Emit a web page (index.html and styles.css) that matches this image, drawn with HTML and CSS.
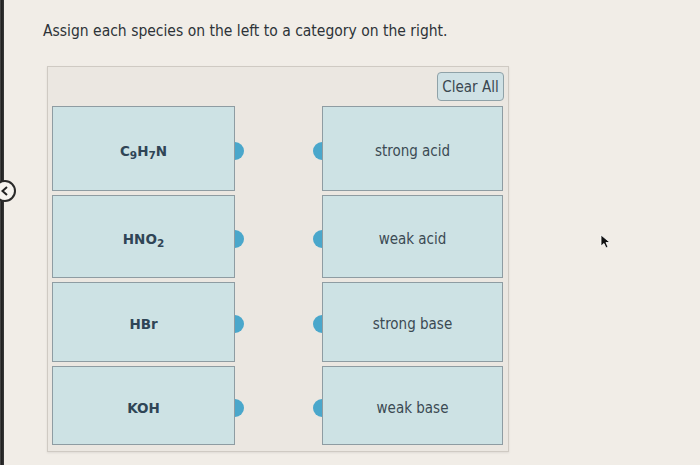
FILE: index.html
```html
<!DOCTYPE html>
<html>
<head>
<meta charset="utf-8">
<link rel="stylesheet" href="styles.css">
</head>
<body>
<div class="bezel"></div>
<div class="nav-btn"><svg width="12" height="12" viewBox="0 0 12 12"><path d="M8 2 L3.5 6 L8 10" fill="none" stroke="#222" stroke-width="2"/></svg></div>
<div class="page">
  <p class="title">Assign each species on the left to a category on the right.</p>
  <div class="panel">
    <div class="toolbar"><button class="clear">Clear All</button></div>
    <div class="rows">
      <div class="row">
        <div class="card left"><span class="formula">C<sub>9</sub>H<sub>7</sub>N</span><i class="knob r"></i></div>
        <div class="card right"><i class="knob l"></i><span>strong acid</span></div>
      </div>
      <div class="row">
        <div class="card left"><span class="formula">HNO<sub>2</sub></span><i class="knob r"></i></div>
        <div class="card right"><i class="knob l"></i><span>weak acid</span></div>
      </div>
      <div class="row">
        <div class="card left"><span class="formula">HBr</span><i class="knob r"></i></div>
        <div class="card right"><i class="knob l"></i><span>strong base</span></div>
      </div>
      <div class="row">
        <div class="card left"><span class="formula">KOH</span><i class="knob r"></i></div>
        <div class="card right"><i class="knob l"></i><span>weak base</span></div>
      </div>
    </div>
  </div>
</div>
<svg class="cursor" width="12" height="16" viewBox="0 0 12 16"><path d="M1 1 L1 12 L4 9.5 L6 14 L8 13 L6 8.5 L10 8.5 Z" fill="#111" stroke="#fff" stroke-width="0.8"/></svg>
</body>
</html>
```
FILE: styles.css
```css
html, body {
  margin: 0;
  padding: 0;
}
body {
  width: 700px;
  height: 465px;
  overflow: hidden;
  background: #f1ede7;
  font-family: "DejaVu Sans Condensed", "DejaVu Sans", sans-serif;
  position: relative;
}
.bezel {
  position: absolute;
  left: 0;
  top: 0;
  width: 4px;
  height: 465px;
  background: linear-gradient(to right, #555 0, #1e1e1e 40%, #3a3a3a 100%);
}
.nav-btn {
  position: absolute;
  left: -6px;
  top: 180px;
  width: 22px;
  height: 22px;
  border-radius: 50%;
  background: #f6f4f0;
  border: 2px solid #2a2a2a;
  display: flex;
  align-items: center;
  justify-content: flex-end;
  padding-right: 3px;
  box-sizing: border-box;
}
.page {
  padding: 21px 0 0 43px;
}
.title {
  margin: 0;
  font-size: 15.5px;
  color: #2d3338;
  line-height: 20px;
}
.panel {
  margin: 25px 0 0 4px;
  width: 462px;
  height: 386px;
  box-sizing: border-box;
  border: 1px solid #cfcac3;
  background: #ebe7e1;
  box-shadow: 0 1px 2px rgba(0,0,0,0.08);
  padding: 5px 4px 5px 4px;
}
.toolbar {
  display: flex;
  justify-content: flex-end;
  height: 34px;
}
.clear {
  width: 67px;
  height: 29px;
  border: 1px solid #8fa2a8;
  border-radius: 4px;
  background: #cfe1e5;
  font-family: "DejaVu Sans Condensed", "DejaVu Sans", sans-serif;
  font-size: 15px;
  color: #3a4750;
  padding: 0;
}
.rows {
  display: flex;
  flex-direction: column;
  gap: 4px;
}
.row {
  display: flex;
  justify-content: space-between;
  height: 82px;
}
.row:nth-child(1) { height: 85px; }
.row:nth-child(2) { height: 83px; }
.row:nth-child(3) { height: 80px; }
.row:nth-child(4) { height: 79px; }
.card {
  position: relative;
  box-sizing: border-box;
  border: 1px solid #8e9ca2;
  background: #cde2e4;
  display: flex;
  align-items: center;
  justify-content: center;
  padding-top: 4px;
}
.card.left {
  width: 183px;
  margin-left: 0;
}
.card.right {
  width: 181px;
  margin-right: 1px;
  font-size: 15px;
  color: #3b4a53;
}
.formula {
  font-family: "DejaVu Sans", sans-serif;
  font-weight: bold;
  font-size: 13.5px;
  color: #2f4556;
}
.formula sub {
  font-size: 10.5px;
  vertical-align: -3px;
  line-height: 0;
}
.knob {
  position: absolute;
  top: calc(50% - 7px);
  width: 9px;
  height: 18px;
  background: #4aa7cb;
}
.knob.r {
  right: -10px;
  border-radius: 0 9px 9px 0;
}
.knob.l {
  left: -10px;
  border-radius: 9px 0 0 9px;
}
.cursor {
  position: absolute;
  left: 600px;
  top: 234px;
}
```
